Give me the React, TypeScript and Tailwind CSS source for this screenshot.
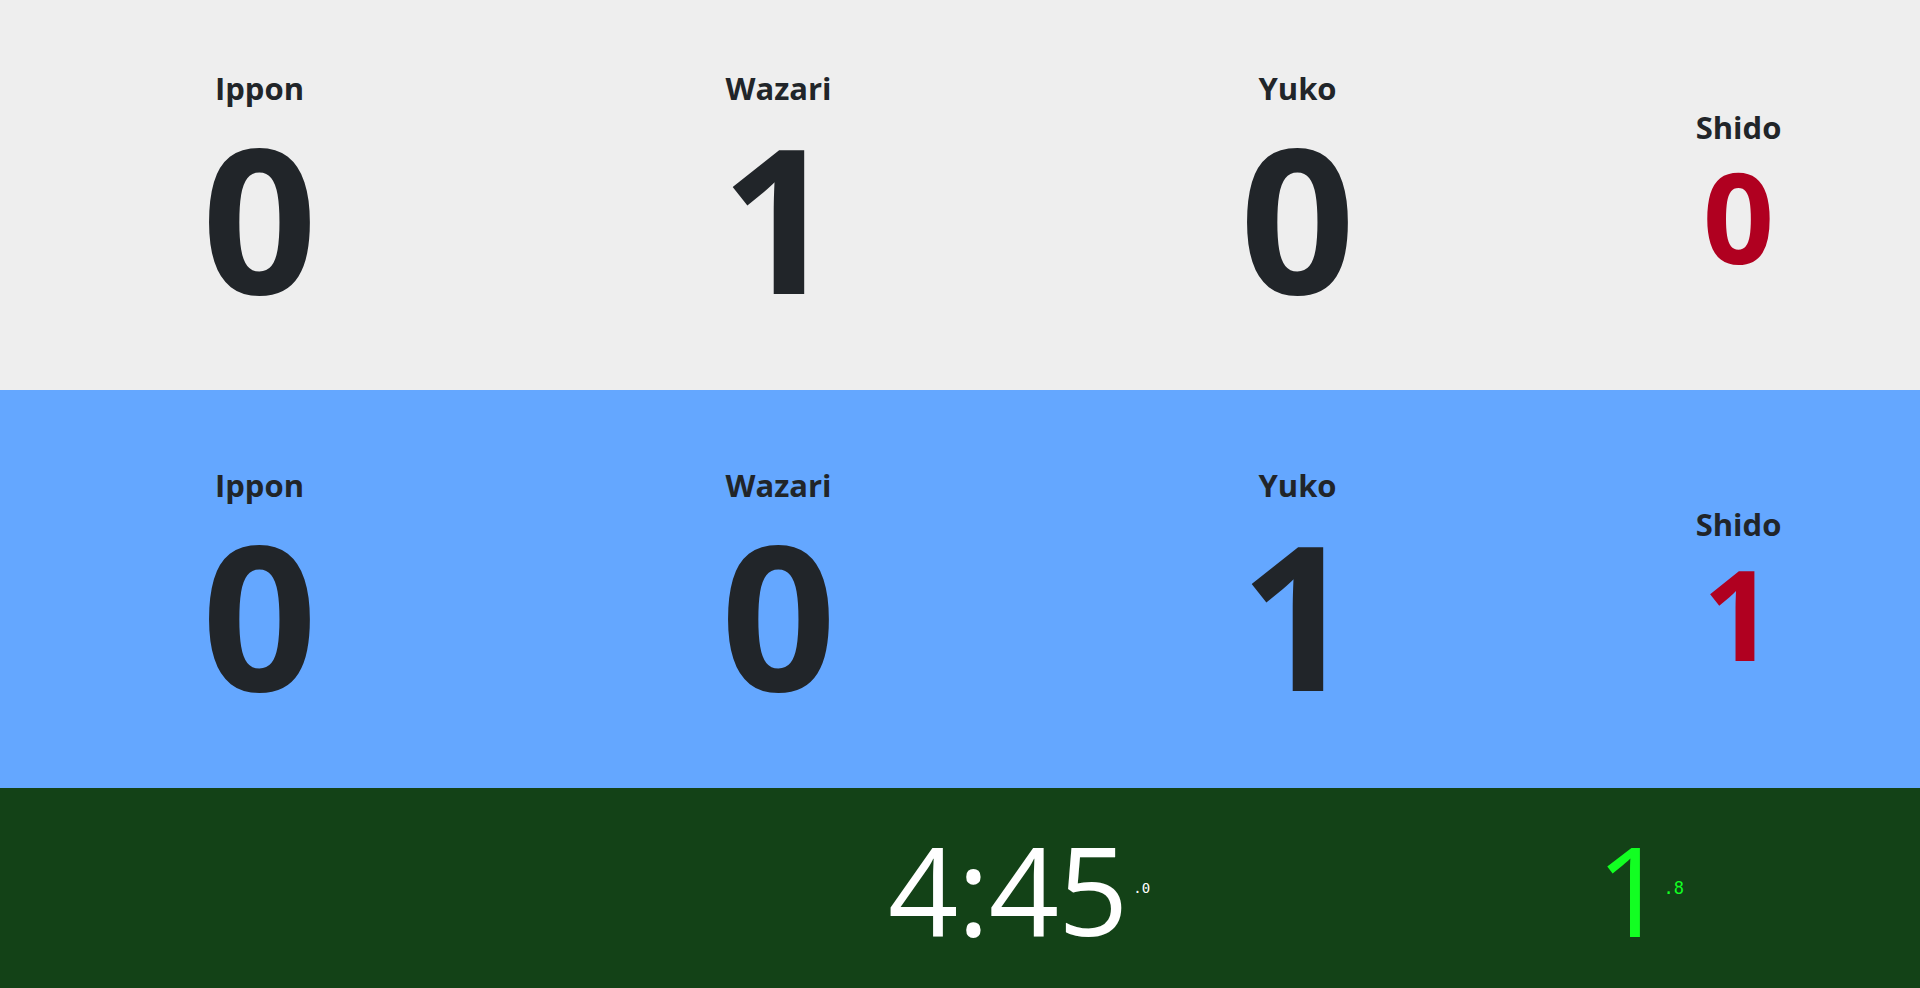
import React from "react";

type Row = { ippon: number; wazari: number; yuko: number; shido: number };

function ScoreCol({ label, value }: { label: string; value: number }) {
  return (
    <div className="flex flex-col items-center gap-[11px]">
      <div className="text-[31px] font-bold leading-none text-[#212529]">{label}</div>
      <div className="text-[202px] font-bold leading-none text-[#212529]">{value}</div>
    </div>
  );
}

function ShidoCol({ value }: { value: number }) {
  return (
    <div className="flex flex-col items-center gap-[10px]">
      <div className="text-[31px] font-bold leading-none text-[#212529]">Shido</div>
      <div className="text-[125px] font-bold leading-none text-[#b00020]">{value}</div>
    </div>
  );
}

function ScoreRow({ row }: { row: Row }) {
  return (
    <div className="grid w-full grid-cols-[519px_519px_519px_1fr] items-center">
      <ScoreCol label="Ippon" value={row.ippon} />
      <ScoreCol label="Wazari" value={row.wazari} />
      <ScoreCol label="Yuko" value={row.yuko} />
      <ShidoCol value={row.shido} />
    </div>
  );
}

export default function App() {
  const white: Row = { ippon: 0, wazari: 1, yuko: 0, shido: 0 };
  const blue: Row = { ippon: 0, wazari: 0, yuko: 1, shido: 1 };
  return (
    <div
      className="flex h-[988px] w-[1920px] flex-col overflow-hidden"
      style={{ fontFamily: '"Open Sans", "Noto Sans", sans-serif' }}
    >
      <div className="flex h-[390px] items-center bg-[#eeeeee]">
        <ScoreRow row={white} />
      </div>
      <div className="flex h-[398px] items-center bg-[#64a7ff] pt-[6px]">
        <ScoreRow row={blue} />
      </div>
      <div className="flex h-[200px] items-center bg-[#134217]">
        <div className="flex w-[1596px] items-center pl-[888px]">
          <div className="text-[123px] font-normal leading-none tracking-[-1px] text-white">4:45</div>
          <div
            className="ml-[6px] text-[14px] leading-none text-white"
            style={{ fontFamily: '"DejaVu Sans Mono", monospace' }}
          >
            .0
          </div>
        </div>
        <div className="flex items-center">
          <div className="text-[125px] font-normal leading-none text-[#12ff22]">1</div>
          <div
            className="ml-[-4px] text-[17px] leading-none text-[#12ff22]"
            style={{ fontFamily: '"DejaVu Sans Mono", monospace' }}
          >
            .8
          </div>
        </div>
      </div>
    </div>
  );
}
